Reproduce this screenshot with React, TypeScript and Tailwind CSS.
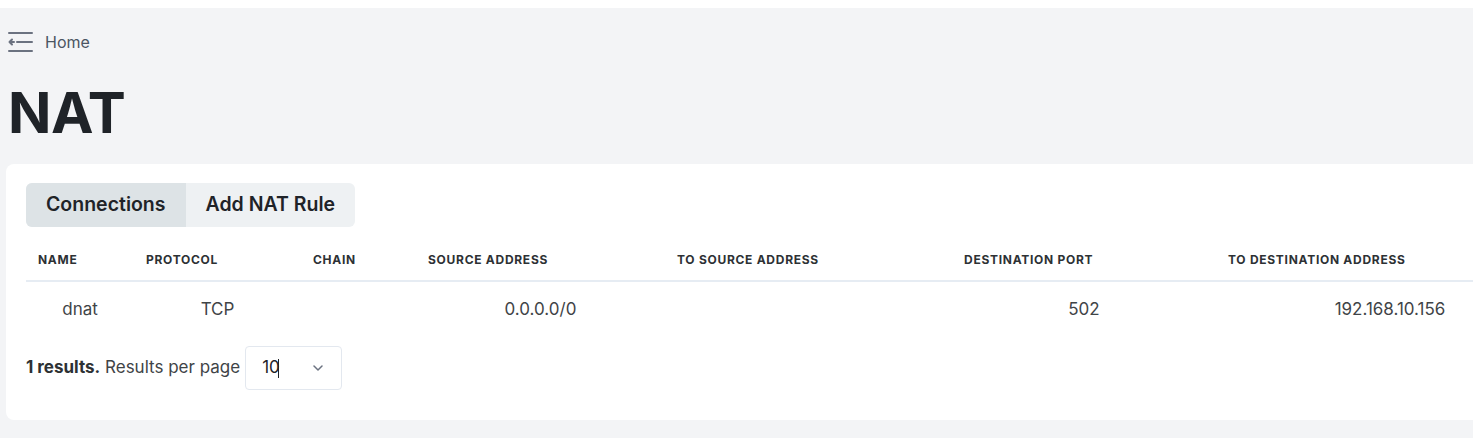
const columns = [
  { label: "Name", width: "w-[108px]" },
  { label: "Protocol", width: "w-[167px]" },
  { label: "Chain", width: "w-[115px]" },
  { label: "Source Address", width: "w-[249px]" },
  { label: "To Source Address", width: "w-[287px]" },
  { label: "Destination Port", width: "w-[264px]" },
  { label: "To Destination Address", width: "w-[348px]" },
];

const rows = [["dnat", "TCP", "", "0.0.0.0/0", "", "502", "192.168.10.156"]];

function MenuIcon() {
  return (
    <svg width="25" height="22" viewBox="0 0 25 22" fill="none" stroke="#6b7280" strokeWidth="2" strokeLinecap="round">
      <line x1="1" y1="2" x2="24" y2="2" />
      <line x1="9" y1="11" x2="24" y2="11" />
      <path d="M1.5 11 H6 M4 8.5 L1.5 11 L4 13.5" strokeLinejoin="round" />
      <line x1="1" y1="20" x2="24" y2="20" />
    </svg>
  );
}

export default function App() {
  return (
    <div className="min-h-screen w-full overflow-hidden bg-white pt-2 font-['Inter',sans-serif] text-[#1f2328]">
      <div className="min-h-[430px] bg-[#f3f4f6] pb-[18px]">
        {/* Header */}
        <div className="px-2 pt-[22px]">
          <div className="flex items-center gap-[12px] h-6">
            <MenuIcon />
            <span className="text-[16px] text-[#4b5563]">Home</span>
          </div>
          <h1 className="mt-[30px] text-[57px] leading-[57px] font-bold tracking-[-0.01em]">NAT</h1>
        </div>

        {/* Card */}
        <div className="mt-[23px] ml-[6px] w-[1590px] rounded-lg bg-white pt-[19px] pl-5 pb-[30px]">
          <div className="inline-flex h-[44px] overflow-hidden rounded-md bg-[#eef1f3] text-[19.5px] font-semibold">
            <button className="bg-[#dde3e6] px-5">Connections</button>
            <button className="px-5">Add NAT Rule</button>
          </div>

          <table className="mt-[12px] table-fixed border-collapse">
            <thead>
              <tr className="h-[42px] border-b-2 border-[#e6ecf3]">
                {columns.map((c) => (
                  <th
                    key={c.label}
                    className={`${c.width} px-3 text-left text-[12px] font-bold uppercase tracking-[0.06em] text-[#2d3134]`}
                  >
                    {c.label}
                  </th>
                ))}
              </tr>
            </thead>
            <tbody>
              {rows.map((r, i) => (
                <tr key={i} className="h-[56px]">
                  {r.map((cell, j) => (
                    <td key={j} className="text-center text-[17px] text-[#3f4447]">
                      {cell}
                    </td>
                  ))}
                </tr>
              ))}
            </tbody>
          </table>

          <div className="mt-[9px] flex items-center gap-[5px] text-[17px] text-[#3f4447]">
            <span>
              <span className="font-bold text-[#2d3134]">1 results.</span> Results per page
            </span>
            <div className="flex h-[44px] w-[97px] items-center justify-between rounded border border-[#e3e8ef] pl-[16px] pr-[18px]">
              <span className="flex items-center text-[#1f2328]">
                10<span className="ml-[-2px] inline-block h-[19px] w-px bg-[#1f2328]" />
              </span>
              <svg width="10" height="6" viewBox="0 0 10 6" fill="none" stroke="#6b7280" strokeWidth="1.5" strokeLinecap="round" strokeLinejoin="round">
                <path d="M1 1 L5 5 L9 1" />
              </svg>
            </div>
          </div>
        </div>
      </div>
    </div>
  );
}
